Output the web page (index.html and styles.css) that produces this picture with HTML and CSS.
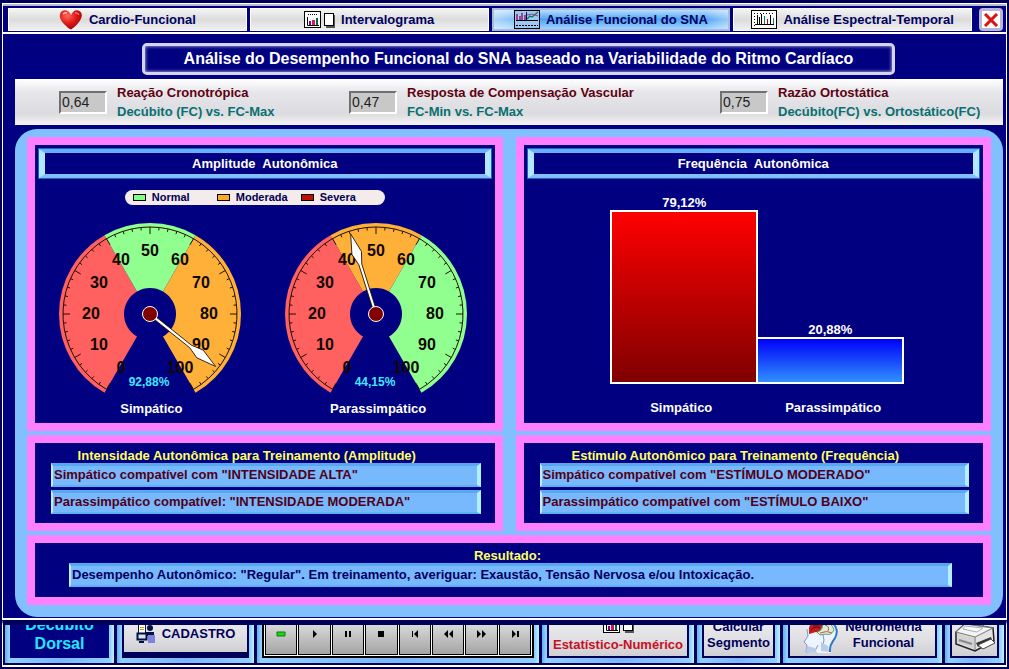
FILE: index.html
```html
<!DOCTYPE html>
<html lang="pt-BR">
<head>
<meta charset="utf-8">
<title>Análise Funcional do SNA</title>
<link rel="stylesheet" href="styles.css">
</head>
<body>
<div class="window">
  <nav class="tabs">
    <button class="tab" type="button">
      <svg width="24" height="20" viewBox="0 0 24 20"><defs><radialGradient id="heart" cx=".35" cy=".3" r=".8"><stop offset="0" stop-color="#ff6a5a"/><stop offset=".5" stop-color="#e01818"/><stop offset="1" stop-color="#8a0000"/></radialGradient></defs><path d="M12 5C10 0 5-1 2 2C-1 6 2 11 5 14C8 17 10 19 12 19.500C14 18 17 16 20 12C23 8 24 4 21 1.500C18-1 14 0 12 5Z" fill="url(#heart)"/><path d="M4 4Q6 2 8 3" stroke="#ffc0b8" stroke-width="1.500" fill="none"/><path d="M16 3Q19 2 20 5" stroke="#ff9a90" fill="none"/></svg>
      <span>Cardio-Funcional</span>
    </button>
    <button class="tab" type="button">
      <svg width="31" height="17" viewBox="0 0 31 17"><rect x=".5" y=".5" width="16" height="16" fill="#fff" stroke="#000"/><path d="M4 3.500H14" stroke="#000" stroke-dasharray="1 1"/><path d="M3.500 6V14.500H15" stroke="#000" fill="none"/><path d="M5 10h2v4H5z" fill="#808"/><path d="M8 9h3v5H8z" fill="#e0105a"/><path d="M12 7h2v7h-2z" fill="#063"/><path d="M22 4h9v13h-9z" fill="#555"/><rect x="20.500" y="2.500" width="9" height="12" fill="#fff" stroke="#000"/></svg>
      <span>Intervalograma</span>
    </button>
    <button class="tab tab-active" type="button">
      <svg width="26" height="19" viewBox="0 0 26 19"><rect x=".5" y=".5" width="25" height="18" fill="#9cc8f4" stroke="#000"/><path d="M2 10.500H24" stroke="#000"/><path d="M2 15.500H24" stroke="#000" stroke-dasharray="2 1"/><path d="M3 10V4M6 10V6M8 10V3M11 10V5" stroke="#906" stroke-width="1.300"/><path d="M13 9L16 6L18 7L24 2" stroke="#087a50" fill="none" stroke-width="1.300"/><path d="M13 5L18 4L24 6" stroke="#a04090" fill="none"/><path d="M12.500 2V11" stroke="#114"/></svg>
      <span>Análise Funcional do SNA</span>
    </button>
    <button class="tab" type="button">
      <svg width="26" height="19" viewBox="0 0 26 19"><rect x=".5" y=".5" width="25" height="18" fill="#fff" stroke="#000"/><path d="M3 3.500H23M3.500 3V16" stroke="#000" stroke-dasharray="1 2"/><path d="M4 14.500H23" stroke="#000"/><path d="M6.500 14V5M8.500 14V7M10.500 14V4" stroke="#000"/><path d="M13.500 14V6" stroke="#087"/><path d="M16.500 14V9" stroke="#c00"/><path d="M19.500 14V5" stroke="#000"/><path d="M22.500 14V8" stroke="#085"/></svg>
      <span>Análise Espectral-Temporal</span>
    </button>
    <button class="close" type="button" aria-label="Fechar">
      <svg width="16" height="14" viewBox="0 0 16 14"><path d="M2 1L14 13M14 1L2 13" stroke="#e01010" stroke-width="3"/></svg>
    </button>
  </nav>

  <h1 class="title">Análise do Desempenho Funcional do SNA baseado na Variabilidade do Ritmo Cardíaco</h1>

  <section class="ratios">
    <div class="ratio"><input id="r1" class="ratio-value" value="0,64" readonly><label for="r1"><span class="ratio-name">Reação Cronotrópica</span><span class="ratio-sub">Decúbito (FC) vs. FC-Max</span></label></div>
    <div class="ratio"><input id="r2" class="ratio-value" value="0,47" readonly><label for="r2"><span class="ratio-name">Resposta de Compensação Vascular</span><span class="ratio-sub">FC-Min vs. FC-Max</span></label></div>
    <div class="ratio"><input id="r3" class="ratio-value" value="0,75" readonly><label for="r3"><span class="ratio-name">Razão Ortostática</span><span class="ratio-sub">Decúbito(FC) vs. Ortostático(FC)</span></label></div>
  </section>

  <main class="board">
    <section class="panel chart-panel">
      <h2 class="panel-head">Amplitude  Autonômica</h2>
      <ul class="legend">
        <li><i class="swatch swatch-normal"></i>Normal</li>
        <li><i class="swatch swatch-moderate"></i>Moderada</li>
        <li><i class="swatch swatch-severe"></i>Severa</li>
      </ul>
      <div class="gauges">
        <svg class="gauge" id="g1" width="184" height="172" viewBox="-92 -92 184 172"></svg>
        <svg class="gauge" id="g2" width="184" height="172" viewBox="-92 -92 184 172"></svg>
      </div>
      <div class="captions"><span>Simpático</span><span>Parassimpático</span></div>
    </section>

    <section class="panel chart-panel">
      <h2 class="panel-head">Frequência  Autonômica</h2>
      <div class="bars">
        <div class="bar-col"><span>79,12%</span><div class="bar bar-red" style="height:174px"></div></div>
        <div class="bar-col"><span>20,88%</span><div class="bar bar-blue" style="height:47px"></div></div>
      </div>
      <div class="captions captions-bars"><span>Simpático</span><span>Parassimpático</span></div>
    </section>

    <section class="panel advice">
      <h3>Intensidade Autonômica para Treinamento (Amplitude)</h3>
      <p class="field">Simpático compatível com "INTENSIDADE ALTA"</p>
      <p class="field">Parassimpático compatível: "INTENSIDADE MODERADA"</p>
    </section>
    <section class="panel advice">
      <h3>Estímulo Autonômico para Treinamento (Frequência)</h3>
      <p class="field">Simpático compatível com "ESTÍMULO MODERADO"</p>
      <p class="field">Parassimpático compatível com "ESTÍMULO BAIXO"</p>
    </section>
    <section class="panel result">
      <h3>Resultado:</h3>
      <p class="field field-result">Desempenho Autonômico: "Regular". Em treinamento, averiguar: Exaustão, Tensão Nervosa e/ou Intoxicação.</p>
    </section>
  </main>
</div>

<footer class="dock">
  <div class="group"><div class="position">Decúbito<br>Dorsal</div></div>
  <div class="group group-register">
    <button class="dock-button" type="button">
      <svg width="20" height="20" viewBox="0 0 20 20"><rect x="2.500" y=".5" width="7" height="9" fill="#fff" stroke="#114"/><path d="M4 3.500H8M4 5.500H8" stroke="#b8a000"/><path d="M1.500 9.500h9v6h-9z" fill="#dde" stroke="#001040" stroke-width="2"/><path d="M3 17h5v2H3z" fill="#001040"/><circle cx="14" cy="4" r="3" fill="#001040"/><path d="M10 8h8v4h-8z" fill="#001040"/><path d="M12 11h7v8h-7z" fill="#8080e0"/></svg>
      <span>CADASTRO</span>
    </button>
  </div>
  <div class="group">
    <div class="player">
      <button type="button" aria-label="Gravar"><svg width="16" height="8"><path d="M4 2h8v4H4z" fill="#18d818" stroke="#0a7a0a"/></svg></button>
      <button type="button" aria-label="Reproduzir"><svg width="16" height="8"><path d="M6 0L10 4L6 8z"/></svg></button>
      <button type="button" aria-label="Pausar"><svg width="16" height="8"><path d="M5 1h2v6H5zM9 1h2v6H9z"/></svg></button>
      <button type="button" aria-label="Parar"><svg width="16" height="8"><path d="M5 1h6v6H5z"/></svg></button>
      <button type="button" aria-label="Início"><svg width="16" height="8"><path d="M5 1h1v6H5zM11 0V8L7 4z"/></svg></button>
      <button type="button" aria-label="Retroceder"><svg width="16" height="8"><path d="M8 0V8L4 4zM13 0V8L9 4z"/></svg></button>
      <button type="button" aria-label="Avançar"><svg width="16" height="8"><path d="M4 0V8L8 4zM9 0V8L13 4z"/></svg></button>
      <button type="button" aria-label="Fim"><svg width="16" height="8"><path d="M5 0V8L9 4zM10 1h2v6h-2z"/></svg></button>
    </div>
  </div>
  <div class="group">
    <button class="dock-button stacked alert" type="button">
      <svg width="31" height="17" viewBox="0 0 31 17"><rect x=".5" y=".5" width="16" height="16" fill="#fff" stroke="#000"/><path d="M3.500 6V14.500H15" stroke="#000" fill="none"/><path d="M5 10h2v4H5z" fill="#808"/><path d="M8 9h3v5H8z" fill="#e0105a"/><path d="M12 7h2v7h-2z" fill="#063"/><path d="M22 4h9v13h-9z" fill="#555"/><rect x="20.500" y="2.500" width="9" height="12" fill="#fff" stroke="#000"/></svg>
      <span>Estatístico-Numérico</span>
    </button>
  </div>
  <div class="group group-segment"><button class="dock-button" type="button"><span>Calcular<br>Segmento</span></button></div>
  <div class="group group-neuro">
    <button class="dock-button" type="button">
      <svg width="36" height="36" viewBox="0 0 36 36"><path d="M8 3C16-1 29 1 34 9C37 18 31 24 27 27L28 35H13L12 33L3 34L4 27L1 24L5 18L4 10Z" fill="#eef4ff"/><path d="M25 2C33 6 36 13 32 20C30 24 26 26 27 34" stroke="#3078c0" stroke-width="2" fill="none"/><path d="M6 10Q8 1 17 2Q21 3 20 11Q18 16 13 14L6 16Z" fill="#c81818"/><path d="M8 12Q12 7 17 10M10 7L17 7" stroke="#501010" fill="none"/><path d="M20 4Q29 4 31 12Q28 18 23 16L17 17L14 14Q20 13 20 4Z" fill="#d8eed8" stroke="#58a070"/><path d="M22 7Q27 8 25 13M17 15Q24 12 29 15" stroke="#d05048" fill="none"/><path d="M20 17Q22 22 20 27M4 11L5 18L1 24L4 27L3 34L12 33L15 27" stroke="#7898c8" fill="none"/><path d="M4 28L12 30L14 35L3 34ZM18 24L25 28L26 34L18 33Z" fill="#b8cce8"/></svg>
      <span>Neurometria<br>Funcional</span>
    </button>
  </div>
  <div class="group">
    <button class="dock-button" type="button" aria-label="Imprimir">
      <svg width="42" height="38" viewBox="0 0 42 38"><path d="M9 13L12 2L27 4L31 14Z" fill="#b8d4ff" stroke="#5078b0"/><path d="M2 17L11 9L39 13L40 26L21 36L2 29Z" fill="#e4e4e4" stroke="#222" stroke-width="1.500"/><path d="M3 18L20 23V34L3 28Z" fill="#d4d4d4"/><path d="M2 17L21 22L39 13L11 9Z" fill="#f4f4f4" stroke="#777"/><path d="M21 22V35" stroke="#777"/><path d="M11 11L29 13L23 17L9 14Z" fill="#fff" stroke="#aaa"/><path d="M5 25L18 29" stroke="#888" stroke-width="2"/><path d="M22 28L37 22L38 25L24 32Z" fill="#333"/><path d="M24 30L37 24L41 28L29 34Z" fill="#fff" stroke="#444"/></svg>
    </button>
  </div>
</footer>
<script src="gauges.js"></script>
</body>
</html>
```

FILE: styles.css
```css
* { box-sizing: border-box; }
body {
  margin: 0;
  min-height: 100vh;
  padding: 3px 2px 2px;
  display: flex;
  flex-direction: column;
  background: #000058;
  font: bold 13px/19px "Liberation Sans", Arial, sans-serif;
  color: #fff;
}
h1, h2, h3, p, ul { margin: 0; padding: 0; font-size: inherit; }
button { font: inherit; padding: 0; cursor: pointer; }
svg { display: block; flex: none; }

.window {
  flex: 1;
  display: flex;
  flex-direction: column;
  border: 1px solid #fff;
  border-bottom-width: 2px;
  background: #000080;
}

.tabs {
  display: grid;
  grid-template-columns: repeat(4, 1fr) 26px;
  column-gap: 3px;
  height: 30px;
  padding: 2px 5px 2px;
  border-top: 2px solid #b8bcc8;
  border-bottom: 2px solid #fff;
}
.tab {
  display: flex;
  align-items: center;
  justify-content: center;
  gap: 6px;
  border: 1px solid #fff;
  background: linear-gradient(#f4f4f4, #dcdcdc 50%, #f0f0f0);
  color: #000060;
}
.tab-active {
  border: 2px solid #a8bcd4;
  background: linear-gradient(90deg, #fff8, #fff0 20%, #fff0 90%, #fff6), linear-gradient(#b8dcff, #50a4f4 50%, #a0d4ff);
}
.close {
  display: grid;
  place-items: center;
  margin-left: 4px;
  margin-right: -2px;
  border: 3px solid #b8b8d4;
  border-radius: 4px;
  background: #fff;
}

.title {
  align-self: center;
  width: 75%;
  margin: 9px 0 4px 28px;
  padding: 3px 0;
  border: 3px solid #d4d4f0;
  border-radius: 5px;
  box-shadow: inset 0 0 3px 1px #8080c0;
  font-size: 16px;
  line-height: 20px;
  text-align: center;
}

.ratios {
  display: grid;
  grid-template-columns: 290fr 371fr 283fr;
  margin: 0 3px 0 12px;
  padding: 4px 0 4px 44px;
  background: linear-gradient(#fff, #e6e6ea 30%, #dcdce0 75%, #f4f4f4);
}
.ratio { display: flex; align-items: center; gap: 10px; }
.ratio-value {
  width: 48px;
  height: 23px;
  padding: 0 1px;
  border: 2px solid;
  border-color: #707070 #fff #fff #707070;
  background: #c8c8c8;
  color: #202020;
  font: 14px "Liberation Sans", Arial, sans-serif;
}
.ratio-name, .ratio-sub { display: block; }
.ratio-name { color: #600010; }
.ratio-sub { color: #087070; }

.board {
  flex: 1;
  display: grid;
  grid-template-columns: 1fr 1fr;
  grid-template-rows: 1fr auto auto;
  gap: 4px 13px;
  margin: 4px 3px 1px 12px;
  padding: 8px 12px 12px;
  border-radius: 22px;
  background: #80c0ff;
}
.panel {
  display: flex;
  flex-direction: column;
  border: 8px solid #ff80ff;
  background: #000080;
}
.chart-panel { padding: 3px 3px 0; }
.panel-head {
  padding: 1px 0;
  margin: 1px 1px 12px;
  border: 4px solid #80c0ff;
  border-width: 4px 6px;
  border-color: #68b0ff #b0e8ff #80c0ff;
  outline: 1px solid #2060c0;
  text-align: center;
  white-space: pre;
}
.legend {
  align-self: center;
  display: grid;
  grid-template-columns: repeat(3, 84px);
  margin-right: 20px;
  padding-left: 8px;
  border-radius: 8px;
  background: #f4ecec;
  color: #000050;
  font-size: 11px;
  line-height: 15px;
  list-style: none;
}
.legend li { display: flex; align-items: center; gap: 6px; }
.swatch { width: 13px; height: 7px; border: 1px solid #000; }
.swatch-normal { background: #80ff80; }
.swatch-moderate { background: #ffa830; }
.swatch-severe { background: #c01000; }
.gauges { display: flex; justify-content: center; gap: 42px; margin: 17px 4px 0 0; }
.num { font-size: 16px; fill: #100800; text-anchor: middle; }
.pct { font-size: 12px; fill: #40e8ff; text-anchor: middle; }
.captions { display: grid; grid-template-columns: 1fr 1fr; margin-top: 5px; text-align: center; }

.bars { flex: 1; display: flex; justify-content: center; align-items: flex-end; padding-left: 8px; }
.bar-col { width: 148px; line-height: 15px; text-align: center; }
.bar-col + .bar-col { margin-left: -2px; }
.bar { border: 2px solid #fff; }
.bar-red { background: linear-gradient(#f00, #800000); }
.bar-blue { background: linear-gradient(#0000f8, #3090ff); }
.captions-bars { align-self: center; grid-template-columns: 152px 152px; margin: 14px 0 6px; padding-left: 8px; }

.advice { padding: 3px 14px 9px 16px; gap: 3px; }
.advice h3 { margin-bottom: -5px; padding-right: 38px; }
h3 { text-align: center; color: #ffff60; }
.field {
  height: 24px;
  padding-left: 1px;
  border: 2px solid #a0dcff;
  border-width: 3px 4px 2px 2px;
  border-color: #58a8f0 #b0f0ff #60b0f0 #c0ecff;
  background: #78b8fc;
  color: #500018;
  line-height: 17px;
}
.result { grid-column: 1 / -1; padding: 3px 31px 10px 34px; }
.result h3 { margin-bottom: -2px; padding-right: 6px; }
.field-result { color: #000060; }

.dock {
  display: grid;
  grid-template-columns: 109fr 137fr 282fr 152fr 83fr 159fr 59fr;
  align-items: end;
  align-content: end;
  gap: 3px;
  height: 47px;
  padding: 0 2px 2px;
  border: 1px solid #fff;
  border-width: 0 1px 2px;
  border-top: 5px solid #000058;
  overflow: hidden;
  background: #000058;
}
.group {
  height: 64px;
  min-width: 0;
  display: flex;
  padding: 0 5px 5px;
  background: linear-gradient(90deg, #60b0f0, #90d0ff 4px, #78b8fc 50%, #90d0ff calc(100% - 4px), #c0f0ff);
}
.group > * { flex: 1; }
.position {
  display: flex;
  align-items: flex-end;
  justify-content: center;
  padding-bottom: 5px;
  background: #000080;
  color: #20e8ff;
  font-size: 16px;
  text-align: center;
}
.dock-button {
  display: flex;
  align-items: flex-end;
  justify-content: center;
  gap: 6px;
  padding-bottom: 3px;
  border: 2px solid #000058;
  background: linear-gradient(#f8f8f8, #e0e0e4 70%, #d0d0d4);
  color: #000058;
  line-height: 16px;
}
.stacked { flex-direction: column; align-items: center; justify-content: flex-end; gap: 4px; }
.group-register .dock-button { align-items: center; padding-top: 18px; border-bottom-width: 6px; }
.group-segment .dock-button, .group-neuro .dock-button { padding-bottom: 5px; }
.group-neuro .dock-button svg { margin-bottom: -3px; }
.alert { color: #c81020; }
.player { display: flex; gap: 1px; padding: 1px; border: 2px solid #000; background: #fff; }
.player button {
  flex: 1;
  display: flex;
  align-items: flex-end;
  justify-content: center;
  padding-bottom: 16px;
  border: 1px solid #000;
  background: linear-gradient(#e4e4e4 30%, #a4a4a4);
}
```

FILE: gauges.js
```js
const COLORS = { normal: "#90ff90", moderate: "#ffb038", severe: "#ff6060" };
const OUTER = 91;
const INNER = 26;

function point(value, radius) {
  const angle = (value - 50) * 3 * Math.PI / 180;
  return [radius * Math.sin(angle), -radius * Math.cos(angle)].map(n => n.toFixed(2)).join(" ");
}

function sector(from, to, color) {
  const large = (to - from) * 3 > 180 ? 1 : 0;
  return `<path fill="${color}" d="M${point(from, INNER)}L${point(from, OUTER)}A${OUTER} ${OUTER} 0 ${large} 1 ${point(to, OUTER)}L${point(to, INNER)}A${INNER} ${INNER} 0 ${large} 0 ${point(from, INNER)}Z"/>`;
}

function drawGauge(id, value, text, zones) {
  let out = sector(0, 40, zones[0]) + sector(40, 60, zones[1]) + sector(60, 100, zones[2]);
  out += `<path fill="none" stroke="#201000" d="M${point(0, 87)}A87 87 0 1 1 ${point(100, 87)}"/>`;
  for (let v = 0; v <= 100; v += 2) {
    out += `<path stroke="#201000" d="M${point(v, 87)}L${point(v, v % 10 ? 84 : 80)}"/>`;
  }
  for (let v = 0; v <= 100; v += 10) {
    const [x, y] = point(v, 59).split(" ").map(Number);
    out += `<text class="num" x="${Math.round(x)}" y="${Math.round(y * 1.06) + 5}">${v}</text>`;
  }
  out += `<g transform="rotate(${(value - 50) * 3})"><path fill="#fff" stroke="#201000" stroke-width=".8" d="M-1.500 -7L-1.500 -52L-5 -64L0 -84L5 -64L1.500 -52L1.500 -7Z"/></g>`;
  out += `<circle r="7.500" fill="#800000" stroke="#fff"/><text class="pct" x="-1" y="72">${text}</text>`;
  document.getElementById(id).innerHTML = out;
}

drawGauge("g1", 92.88, "92,88%", [COLORS.severe, COLORS.normal, COLORS.moderate]);
drawGauge("g2", 44.15, "44,15%", [COLORS.severe, COLORS.moderate, COLORS.normal]);
```
